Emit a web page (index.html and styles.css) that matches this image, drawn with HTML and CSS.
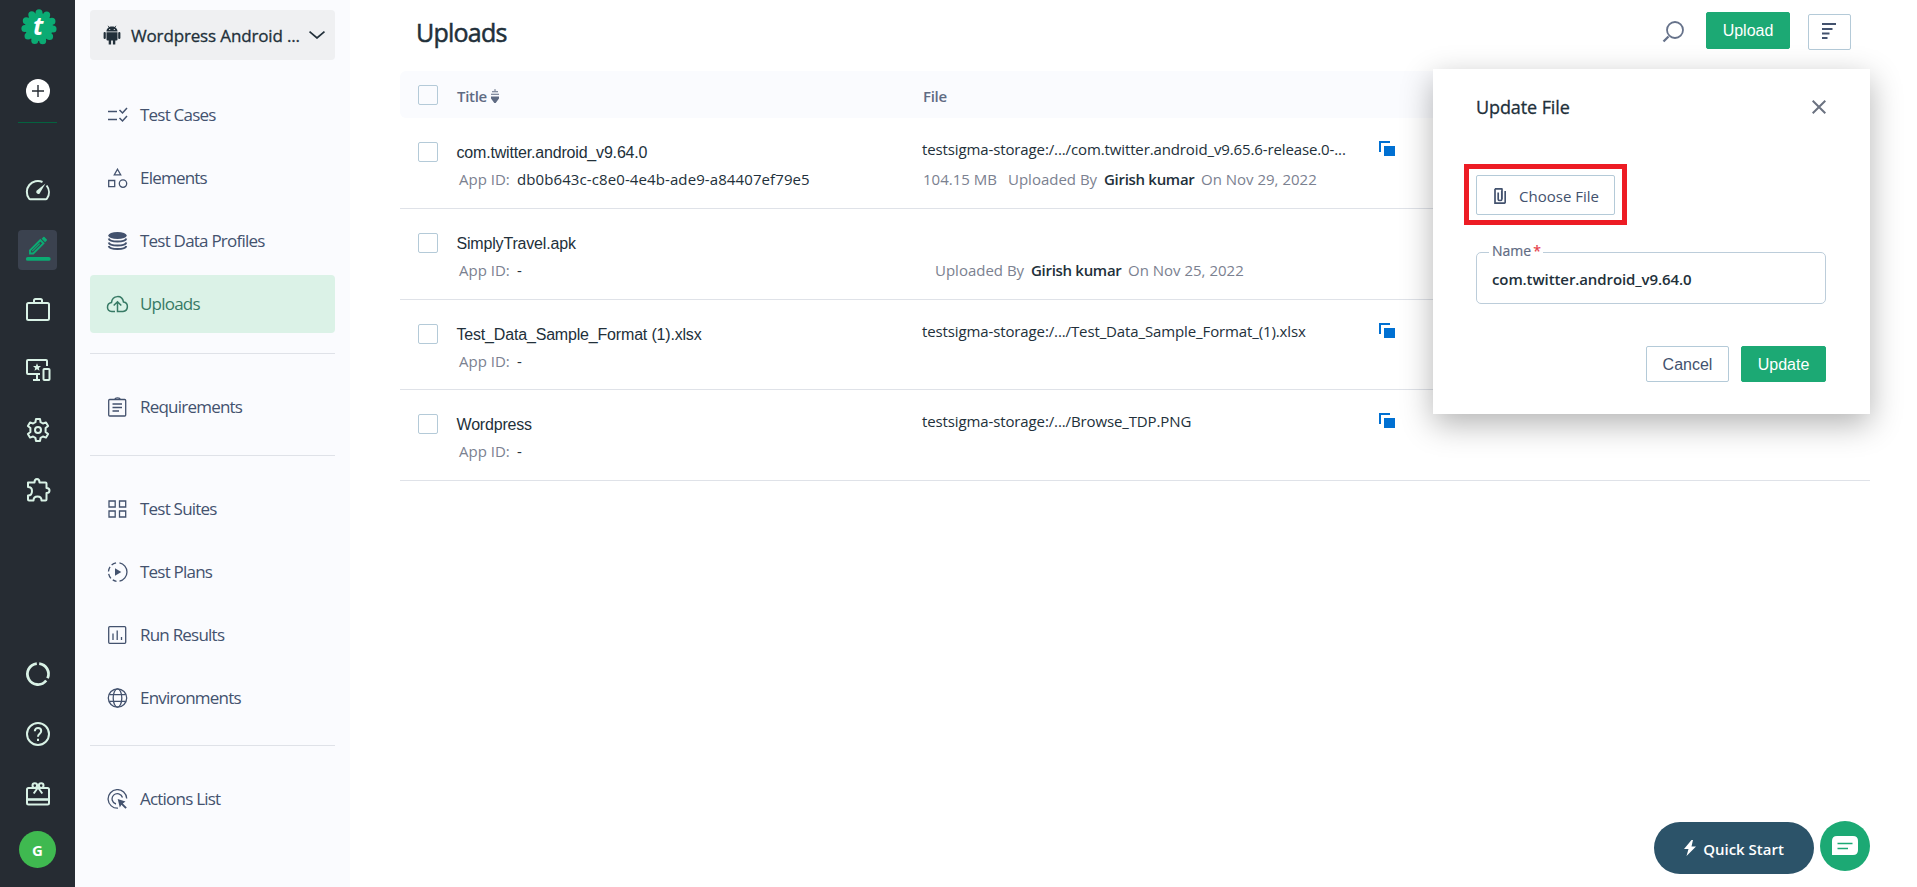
FILE: index.html
```html
<!DOCTYPE html>
<html lang="en">
<head>
  <meta charset="UTF-8">
  <title>Uploads</title>
  <link rel="stylesheet" href="styles.css">
</head>
<body>

<div class="app">

  <nav class="rail">
    <svg class="logo" viewBox="0 0 36 36" width="36" height="36">
      <circle cx="18" cy="18" r="14" fill="#0bab73"/>
      <circle cx="18" cy="18" r="14.2" fill="none" stroke="#0bab73" stroke-width="7" stroke-linecap="round" stroke-dasharray="0 8.111" transform="rotate(-90 18 18)"/>
      <text class="logo-text" x="12" y="26">t</text>
    </svg>
    <svg class="add" viewBox="0 0 24 24" width="24" height="24"><circle cx="12" cy="12" r="12" fill="#fff"/><path d="M12 6v12M6 12h12" stroke="#262c33" stroke-width="1.4"/></svg>
    <div class="rail-line"></div>

    <div class="rail-group">
      <a class="rail-item"><svg viewBox="0 0 24 24"><path d="M16.5 4A11 11 0 0 0 3 20.500a1.500 1.500 0 0 0 1.300.7h15.400a1.500 1.500 0 0 0 1.300-.7A11 11 0 0 0 20.600 7.500"/><path d="M19.500 5.500l-9 7.200a2.200 2.200 0 0 0 3 3z" fill="#d9f2e6" stroke="none"/></svg></a>
      <a class="rail-item active"><svg viewBox="0 0 24 24"><path d="M4 15.500V12.400L14.300 2.200l3.100 3.100L7.200 15.500z" stroke-width="1.900"/><path d="M15.600.8l1.700-1.700q.6-.6 1.200 0l2.300 2.300q.6.6 0 1.200L19.100 4.300z" fill="#0bab73" stroke="none"/><path d="M6.200 13.200l7.500-7.500" stroke-width="1.200"/><path d="M1.800 20.900h20.900" stroke-width="3.900" stroke-linecap="round"/></svg></a>
      <a class="rail-item"><svg viewBox="0 0 24 24"><rect x="1" y="5" width="22" height="17" rx="1.500"/><path d="M8 5V2.500Q8 1 9.500 1h5Q16 1 16 2.500V5"/></svg></a>
      <a class="rail-item"><svg viewBox="0 0 24 24"><path d="M21 8V3Q21 2 20 2H2Q1 2 1 3v12q0 1 1 1h12M11 16v5M7 22h7"/><rect x="17.500" y="11" width="6" height="11" rx=".8"/><path d="M11 5.200l1.100 2.700 2.900.2-2.200 1.900.7 2.800-2.500-1.500-2.500 1.500.7-2.800L7 8.100l2.900-.2z" fill="#d9f2e6" stroke="none"/></svg></a>
      <a class="rail-item"><svg viewBox="0 0 24 24"><path d="M10 1h4l.6 3.200 2.300 1.300 3.100-1.100 2.100 3.500-2.500 2.100v4l2.500 2.100-2.100 3.500-3.100-1.100-2.300 1.300L14 23h-4l-.6-3.200-2.300-1.300L4 19.600l-2.100-3.500L4.400 14v-4L1.900 7.900 4 4.400l3.100 1.100 2.300-1.300z" stroke-linejoin="round"/><circle cx="12" cy="12" r="3"/></svg></a>
      <a class="rail-item"><svg viewBox="0 0 24 24"><path d="M2 4.500h6.500C8.500 2 9.500 1 11 1s2.500 1 2.500 3.500h6q1 0 1 1V10c2 0 3 1 3 2.500S22.500 15 20.500 15v6.500q0 1-1 1H15.500C15.500 20 14 18.500 11.500 18.500S7.500 20 7.500 22.500H3q-1 0-1-1V17.500C4.500 17.500 6 15.500 6 13S4.500 9 2 9z" stroke-linejoin="round"/></svg></a>
    </div>

    <div class="rail-group bottom">
      <a class="rail-item"><svg viewBox="0 0 24 24"><path d="M13.200 1.600A10.500 10.500 0 0 1 21.600 16.200M20.200 18.500A10.500 10.500 0 1 1 10.800 1.600" stroke-width="2.800"/></svg></a>
      <a class="rail-item"><svg viewBox="0 0 24 24"><circle cx="12" cy="12" r="11"/><path d="M8.800 9.200C8.800 4.900 15.200 5 15.200 9.100c0 2.700-3.200 2.700-3.200 5.600M12 16.700v2.200"/></svg></a>
      <a class="rail-item"><svg viewBox="0 0 24 24"><rect x="1" y="6" width="22" height="16.500" rx="1.500"/><path d="M1 17.500h22" stroke-width="2.600"/><circle cx="8.800" cy="3.600" r="2.300"/><circle cx="15.200" cy="3.600" r="2.300"/><path d="M12 5.500l-4.300 6M12 5.500l4.300 6"/></svg></a>
      <div class="avatar">G</div>
    </div>
  </nav>

  <aside class="sidebar">
    <div class="project">
      <svg viewBox="0 0 18 20" width="18" height="20" fill="#22303a"><path d="M3.500 6.500C3.500 3.600 5.700 1.500 9 1.500s5.500 2.100 5.500 5zM3.500 7.200h11v7.300q0 1-1 1h-9q-1 0-1-1z"/><rect x=".6" y="7" width="2.200" height="7" rx="1.100"/><rect x="15.200" y="7" width="2.200" height="7" rx="1.100"/><path d="M5.700 15h2.400v4.500H5.700zM9.900 15h2.400v4.500H9.900z"/><path d="M5 .8l1.500 2M13 .8l-1.500 2" stroke="#22303a" stroke-width=".8"/><path d="M6.200 4h1v1h-1zM10.800 4h1v1h-1z" fill="#eff0f2"/></svg>
      <span class="project-name">Wordpress Android ...</span>
      <svg class="chevron" viewBox="0 0 16 8" width="16" height="8"><path d="M.5.6L8 7 15.500.6" fill="none" stroke="#22303a" stroke-width="1.700"/></svg>
    </div>

    <ul class="menu">
      <li><svg viewBox="0 0 20 20"><path d="M.5 6.500h9M.5 14.500h9M12 5l3 3 4.500-5M12 13l3 3 4.500-5" stroke-width="1.500"/></svg><span>Test Cases</span></li>
      <li><svg viewBox="0 0 20 20"><path d="M10 1.200l3.200 5.600H6.800zM1.200 12.500h6v6.200h-6z"/><circle cx="15.500" cy="15.600" r="3.700"/></svg><span>Elements</span></li>
      <li><svg viewBox="0 0 20 20"><ellipse cx="10" cy="4.500" rx="9.200" ry="3.600" fill="#43526e" stroke="none"/><path d="M1.200 7.500c1 4 16.600 4 17.600 0M1.200 11.500c1 4 16.600 4 17.600 0M1.200 15c1 4 16.600 4 17.600 0" stroke-width="1.900"/></svg><span>Test Data Profiles</span></li>
      <li class="selected"><svg class="cloud" viewBox="0 0 22 20"><path d="M8.500 17.500H5.300C-.5 17-.3 9.500 5 8.500 6 1 15.500.5 17 8c5.500.8 5 9-.5 9.500h-5.500V8M7.200 11.500L11 7.700l3.800 3.800"/></svg><span>Uploads</span></li>
    </ul>
    <hr class="sep first">
    <ul class="menu">
      <li><svg viewBox="0 0 20 20"><rect x="1.200" y="2.500" width="17" height="16.500" rx="1"/><path d="M7.500 2.500Q7.500.8 10 .8t2.500 1.700M5 7h9.500M5 10.500h9.500M5 14h6.500"/></svg><span>Requirements</span></li>
    </ul>
    <hr class="sep">
    <ul class="menu">
      <li><svg viewBox="0 0 20 20"><path d="M1.500 2h6.200v6H1.500zM12 2h6.200v6H12zM1.500 12h6.200v6H1.500zM12 12h6.200v6H12z"/></svg><span>Test Suites</span></li>
      <li><svg viewBox="0 0 20 20"><path d="M12 .8a9.400 9.400 0 0 1 0 18.400"/><path d="M9 19.300A9.400 9.400 0 0 1 9 .7" stroke-dasharray="5 2.400" stroke-dashoffset="1"/><path d="M7.500 6.200l6.300 3.800-6.300 3.800z" fill="#43526e" stroke="none"/></svg><span>Test Plans</span></li>
      <li><svg viewBox="0 0 20 20"><rect x="1.200" y="1.700" width="17" height="16.600" rx="1"/><path d="M5.500 8.500V15M9.700 5.500V15M14 12v3"/></svg><span>Run Results</span></li>
      <li><svg viewBox="0 0 20 20"><circle cx="10" cy="10" r="9.200"/><ellipse cx="10" cy="10" rx="4.300" ry="9.200"/><path d="M1.800 6.700h16.400M1.800 13.300h16.400"/></svg><span>Environments</span></li>
    </ul>
    <hr class="sep third">
    <ul class="menu">
      <li><svg viewBox="0 0 20 20"><path d="M19.200 9.500A9.300 9.300 0 1 0 10.500 19.200M15 8.500A5.300 5.300 0 1 0 8.500 15"/><path d="M10.200 10l7.800 2.600-2.700 1.800 4 4-1.400 1.400-4-4-1.600 2.600z" fill="#43526e" stroke="none"/></svg><span>Actions List</span></li>
    </ul>
  </aside>

  <main class="main">
    <header class="topbar">
      <h1>Uploads</h1>
      <svg class="search" viewBox="0 0 22 22" width="22" height="22"><circle cx="13" cy="9" r="8" /><path d="M6.500 15.500l-5 5" stroke-width="2.300"/></svg>
      <button class="btn primary upload">Upload</button>
      <button class="btn filter"><svg viewBox="0 0 14 16" width="14" height="16"><path d="M0 1h14M0 6h10.500M0 10.500h7.500M0 15h5.500" stroke="#43526e" stroke-width="2"/></svg></button>
    </header>

    <div class="table">
      <div class="thead">
        <div class="cell-check"><span class="checkbox"></span></div>
        <div class="col-head"><span>Title</span><svg class="sort" viewBox="0 0 8 14" width="8" height="14"><path d="M4 0l1.300 1.500H2.700zM1 2.300h6v1H1zM0 4.800h8v1H0zM0 7.500h8v2L4.700 14H3.300L0 9.500z" fill="#5f6b83"/></svg></div>
        <div class="col-head"><span class="h-file">File</span></div>
      </div>

      <div class="row">
        <div class="cell-check"><span class="checkbox"></span></div>
        <div class="cell-title">
          <div class="name">com.twitter.android_v9.64.0</div>
          <div class="sub"><span class="appid">App ID:</span><span class="appval">db0b643c-c8e0-4e4b-ade9-a84407ef79e5</span></div>
        </div>
        <div class="cell-file">
          <div class="path">testsigma-storage:/.../com.twitter.android_v9.65.6-release.0-...</div>
          <div class="meta"><span class="size">104.15 MB</span><span class="by">Uploaded By</span><b>Girish kumar</b><span class="on">On Nov 29, 2022</span></div>
        </div>
        <div class="cell-copy"><i class="copy"></i></div>
      </div>

      <div class="row">
        <div class="cell-check"><span class="checkbox"></span></div>
        <div class="cell-title">
          <div class="name">SimplyTravel.apk</div>
          <div class="sub"><span class="appid">App ID:</span><span class="appval">-</span></div>
        </div>
        <div class="cell-file">
          <div class="path"></div>
          <div class="meta nosize"><span class="by">Uploaded By</span><b>Girish kumar</b><span class="on">On Nov 25, 2022</span></div>
        </div>
      </div>

      <div class="row short">
        <div class="cell-check"><span class="checkbox"></span></div>
        <div class="cell-title">
          <div class="name">Test_Data_Sample_Format (1).xlsx</div>
          <div class="sub"><span class="appid">App ID:</span><span class="appval">-</span></div>
        </div>
        <div class="cell-file"><div class="path">testsigma-storage:/.../Test_Data_Sample_Format_(1).xlsx</div></div>
        <div class="cell-copy"><i class="copy"></i></div>
      </div>

      <div class="row">
        <div class="cell-check"><span class="checkbox"></span></div>
        <div class="cell-title">
          <div class="name">Wordpress</div>
          <div class="sub"><span class="appid">App ID:</span><span class="appval">-</span></div>
        </div>
        <div class="cell-file"><div class="path">testsigma-storage:/.../Browse_TDP.PNG</div></div>
        <div class="cell-copy"><i class="copy"></i></div>
      </div>
    </div>
  </main>
</div>

<div class="dialog">
  <div class="dialog-head">
    <h2>Update File</h2>
    <svg viewBox="0 0 14 14" width="14" height="14"><path d="M.7.7l12.600 12.600M13.300.7L.7 13.300" stroke="#6b7280" stroke-width="2"/></svg>
  </div>
  <div class="highlight">
    <button class="btn choose">
      <svg viewBox="0 0 12 16" width="12" height="16" fill="none" stroke="#43526e" stroke-width="1.700"><path d="M7.800 3v8.500q0 1-1.800 1t-1.800-1V4.500M1 .8h7.500M1 .8v14.400h9q1.200 0 1.200-1.200V3M8 .8V11"/></svg>
      <span>Choose File</span>
    </button>
  </div>
  <div class="field">
    <label>Name<em>*</em></label>
    <div class="value">com.twitter.android_v9.64.0</div>
  </div>
  <div class="actions">
    <button class="btn cancel">Cancel</button>
    <button class="btn primary update">Update</button>
  </div>
</div>

<div class="floating">
  <button class="quick">
    <svg viewBox="0 0 12 16" width="12" height="16"><path d="M7.500 0L0 9h4.500L2.500 16 12 6.500H7.500L9 0z" fill="#fff"/></svg>
    <span>Quick Start</span>
  </button>
  <button class="chat">
    <svg viewBox="0 0 26 20" width="26" height="20"><path d="M5 0h16q5 0 5 5v9q0 5-5 5H0V5q0-5 5-5z" fill="#fff"/><path d="M5.500 7.500h15M5.500 12.500h10.500" stroke="#1ca974" stroke-width="1.300"/></svg>
  </button>
</div>

</body>
</html>
```
FILE: styles.css
```css
* {
  box-sizing: border-box;
}

body {
  margin: 0;
  font-family: "Open Sans", "Noto Sans", sans-serif;
  font-size: 15px;
  color: #22303a;
  background: #fff;
  overflow: hidden;
}

h1, h2, ul {
  margin: 0;
  padding: 0;
}

button {
  font-family: inherit;
  padding: 0;
  margin: 0;
}

span, .name, .path {
  white-space: nowrap;
}

.app {
  display: flex;
  height: 887px;
}

/* dark icon rail */
.rail {
  width: 75px;
  flex: none;
  background: #262c33;
  display: flex;
  flex-direction: column;
  align-items: center;
  padding-top: 9px;
}

.logo {
  margin-left: 3px;
}

.logo-text {
  font: italic bold 25px "Open Sans", sans-serif;
  fill: #fff;
}

.add {
  margin: 34px 0 0 1px;
}

.rail-line {
  width: 39px;
  height: 1px;
  margin: 19px 0 47px;
  background: #04623f;
}

.rail-group {
  display: flex;
  flex-direction: column;
  align-items: center;
  gap: 20px;
}

.rail-group.bottom {
  margin-top: auto;
  padding-bottom: 19px;
}

.rail-item {
  width: 39px;
  height: 40px;
  border-radius: 4px;
  display: flex;
  align-items: center;
  justify-content: center;
}

.rail-item svg {
  width: 24px;
  height: 24px;
  margin-left: 1px;
  fill: none;
  stroke: #d9f2e6;
  stroke-width: 2;
  overflow: visible;
}

.rail-item.active {
  background: #3b424f;
}

.rail-item.active svg {
  stroke: #0bab73;
}

.avatar {
  width: 37px;
  height: 37px;
  border-radius: 50%;
  margin-top: -3px;
  background: #3fb950;
  color: #fff;
  font-size: 15px;
  font-weight: 700;
  line-height: 38px;
  text-align: center;
}

/* project menu */
.sidebar {
  width: 275px;
  flex: none;
  background: #fafbfe;
  padding: 10px 15px;
}

.project {
  height: 50px;
  border-radius: 4px;
  background: #eff0f2;
  display: flex;
  align-items: center;
  padding: 0 10px 0 13px;
}

.project-name {
  font-size: 17px;
  margin-left: 10px;
  letter-spacing: -0.15px;
  -webkit-text-stroke: 0.3px;
}

.chevron {
  margin-left: auto;
}

.menu {
  list-style: none;
  display: flex;
  flex-direction: column;
  gap: 5px;
}

.project + .menu {
  margin-top: 26px;
}

.menu li {
  height: 58px;
  border-radius: 4px;
  display: flex;
  align-items: center;
  padding-left: 17px;
  gap: 12px;
  font-size: 17px;
  letter-spacing: -0.78px;
  color: #43526e;
}

.menu span {
  padding-bottom: 2px;
}

.menu svg {
  width: 21px;
  height: 20px;
  fill: none;
  stroke: #43526e;
  stroke-width: 1.300;
}

.menu .selected {
  background: #dbf2e7;
  color: #377a65;
}

.menu .selected svg {
  stroke: #377a65;
  stroke-width: 1.500;
}

.menu .cloud {
  width: 23px;
  margin: 0 -1px;
}

.sep {
  height: 1px;
  border: 0;
  margin: 19px 0 24px;
  background: #dfe2e8;
}

.sep.first {
  margin-top: 20px;
}

.sep.third {
  margin-top: 18px;
}

/* uploads list */
.main {
  flex: 1;
  padding: 0 47px 0 50px;
}

.topbar {
  height: 71px;
  display: flex;
  align-items: flex-start;
  padding: 12px 19px 0 16px;
}

.topbar h1 {
  font-size: 25px;
  font-weight: 400;
  line-height: 40px;
  letter-spacing: -0.75px;
  -webkit-text-stroke: 0.5px;
  margin-right: auto;
}

.search {
  margin: 9px 22px 0 0;
  fill: none;
  stroke: #66728a;
  stroke-width: 1.800;
}

.btn {
  border: 1px solid #b4cad8;
  border-radius: 2px;
  background: #fff;
  color: #43526e;
  font-family: "Liberation Sans", Arial, sans-serif;
  font-size: 16px;
  display: flex;
  align-items: center;
  justify-content: center;
}

.btn.primary {
  background: #1ca974;
  border-color: #1ca974;
  color: #fff;
}

.upload {
  width: 84px;
  height: 37px;
}

.filter {
  width: 43px;
  height: 36px;
  margin: 2px 0 0 18px;
  padding: 0 2px 2px 0;
}

.thead, .row {
  display: grid;
  grid-template-columns: 57px 465px 457px 1fr;
}

.thead {
  height: 47px;
  border-radius: 6px;
  background: #fafbfe;
}

.row {
  height: 91px;
  border-bottom: 1px solid #dfe2e8;
}

.row.short {
  height: 90px;
}

.cell-check {
  padding: 24px 0 0 18px;
}

.thead .cell-check {
  padding-top: 14px;
}

.checkbox {
  display: block;
  width: 20px;
  height: 20px;
  border: 1px solid #b4cad8;
  border-radius: 2px;
}

.col-head {
  display: flex;
  align-items: center;
  color: #5f6b83;
  font-weight: 600;
  letter-spacing: -0.3px;
  padding-top: 3px;
}

.h-file {
  margin-left: 1px;
}

.sort {
  margin-left: 4px;
}

.cell-title {
  padding-top: 23px;
}

.name {
  font-family: "Liberation Sans", Arial, sans-serif;
  font-size: 16px;
  line-height: 24px;
  letter-spacing: -0.18px;
  margin-left: -0.5px;
}

.sub {
  line-height: 24px;
  margin: 2px 0 0 2px;
  display: flex;
}

.appid {
  width: 58px;
  color: #7b8190;
}

.appval {
  letter-spacing: 0.1px;
}

.cell-file {
  padding-top: 19px;
}

.path {
  height: 24px;
  line-height: 24px;
  letter-spacing: -0.12px;
}

.meta {
  margin-top: 6px;
  line-height: 24px;
  display: flex;
  color: #7b8190;
}

.meta.nosize {
  padding-left: 13px;
}

.size {
  width: 86px;
  padding-left: 1px;
}

.by {
  width: 96px;
}

.meta b {
  width: 97px;
  color: #22303a;
  font-weight: 600;
  letter-spacing: -0.3px;
  white-space: nowrap;
}

.copy {
  display: block;
  position: relative;
  width: 16px;
  height: 15px;
  margin-top: 23px;
  border: solid #0070d2;
  border-width: 2px 0 0 2px;
  clip-path: polygon(0 0, 11px 0, 11px 5px, 16px 5px, 16px 15px, 5px 15px, 5px 11px, 0 11px);
}

.copy::after {
  content: "";
  position: absolute;
  left: 3px;
  top: 3px;
  width: 11px;
  height: 10px;
  background: #0070d2;
}

/* update dialog, floats over the list */
.dialog {
  position: absolute;
  left: 1433px;
  top: 69px;
  width: 437px;
  height: 345px;
  padding: 0 44px 0 43px;
  background: #fff;
  box-shadow: 0 10px 30px rgba(0, 0, 0, 0.3);
}

.dialog-head {
  height: 95px;
  display: flex;
  justify-content: space-between;
  align-items: flex-start;
  padding-top: 26px;
}

.dialog-head h2 {
  font-size: 18px;
  font-weight: 400;
  line-height: 25px;
  letter-spacing: -0.1px;
  -webkit-text-stroke: 0.3px;
}

.dialog-head svg {
  margin-top: 5px;
}

.highlight {
  width: 163px;
  height: 61px;
  margin-left: -12px;
  padding: 6px 7px;
  border: 5px solid #ed1c24;
}

.choose {
  width: 139px;
  height: 40px;
  font-family: inherit;
  gap: 13px;
  padding: 2px 0 0 2px;
}

.choose span {
  font-size: 15px;
}

.field {
  position: relative;
  height: 52px;
  margin-top: 27px;
  border: 1px solid #bccdda;
  border-radius: 5px;
}

.field label {
  position: absolute;
  left: 12px;
  top: -13px;
  padding: 0 2px 0 3px;
  background: #fff;
  font-size: 14px;
  line-height: 22px;
  color: #5f6b83;
  -webkit-text-stroke: 0.2px;
}

.field em {
  color: #e63946;
  font-style: normal;
  margin-left: 2px;
}

.value {
  padding-left: 15px;
  line-height: 52px;
  font-weight: 600;
  letter-spacing: -0.1px;
}

.actions {
  display: flex;
  justify-content: flex-end;
  gap: 12px;
  margin-top: 42px;
}

.actions .btn {
  padding-top: 1px;
}

.cancel {
  width: 83px;
  height: 36px;
}

.update {
  width: 85px;
  height: 36px;
}

.floating {
  position: absolute;
  left: 1654px;
  top: 821px;
  display: flex;
  gap: 6px;
}

.quick {
  width: 160px;
  height: 52px;
  margin-top: 1px;
  border: 0;
  border-radius: 26px;
  background: #2c5369;
  color: #fff;
  font-size: 15px;
  font-weight: 600;
  display: flex;
  align-items: center;
  justify-content: center;
  gap: 7px;
}

.quick span {
  padding-top: 2px;
}

.chat {
  width: 50px;
  height: 50px;
  border: 0;
  border-radius: 50%;
  background: #1ca974;
  display: flex;
  align-items: center;
  justify-content: center;
}
```
